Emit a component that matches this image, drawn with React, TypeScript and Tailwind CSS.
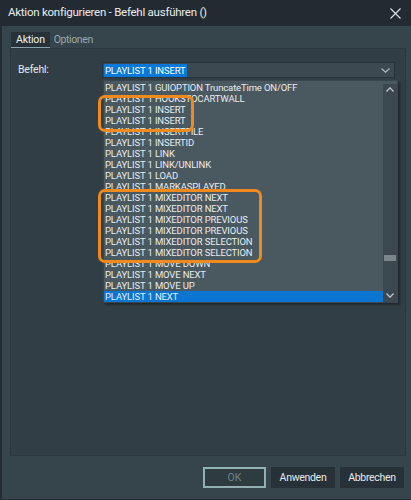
import React from 'react';

const commands = [
  'PLAYLIST 1 GUIOPTION TruncateTime ON/OFF',
  'PLAYLIST 1 HOOKSTOCARTWALL',
  'PLAYLIST 1 INSERT',
  'PLAYLIST 1 INSERT',
  'PLAYLIST 1 INSERTFILE',
  'PLAYLIST 1 INSERTID',
  'PLAYLIST 1 LINK',
  'PLAYLIST 1 LINK/UNLINK',
  'PLAYLIST 1 LOAD',
  'PLAYLIST 1 MARKASPLAYED',
  'PLAYLIST 1 MIXEDITOR NEXT',
  'PLAYLIST 1 MIXEDITOR NEXT',
  'PLAYLIST 1 MIXEDITOR PREVIOUS',
  'PLAYLIST 1 MIXEDITOR PREVIOUS',
  'PLAYLIST 1 MIXEDITOR SELECTION',
  'PLAYLIST 1 MIXEDITOR SELECTION',
  'PLAYLIST 1 MOVE DOWN',
  'PLAYLIST 1 MOVE NEXT',
  'PLAYLIST 1 MOVE UP',
  'PLAYLIST 1 NEXT',
];

const Chevron = ({ up = false, w = 8, h = 5, color = '#c3cbcf' }: { up?: boolean; w?: number; h?: number; color?: string }) => (
  <svg width={w} height={h} viewBox={`0 0 ${w} ${h}`} fill="none">
    <path
      d={up ? `M0.5 ${h - 0.5} L${w / 2} 0.8 L${w - 0.5} ${h - 0.5}` : `M0.5 0.5 L${w / 2} ${h - 0.8} L${w - 0.5} 0.5`}
      stroke={color}
      strokeWidth="1.2"
    />
  </svg>
);

const App = () => {
  const selected = commands.length - 1;

  return (
    <div className="w-[411px] h-[500px] flex flex-col bg-[#36454c] border-l-2 border-b border-[#232c31] font-['Roboto','Liberation_Sans',sans-serif] overflow-hidden">
      {/* Title bar */}
      <div className="h-[26px] shrink-0 bg-[#222b31] flex items-center justify-between pl-[6px] pr-[10px]">
        <span className="text-[11.5px] text-[#e9edef] tracking-[-0.25px]">Aktion konfigurieren - Befehl ausführen ()</span>
        <svg width="11" height="11" viewBox="0 0 11 11">
          <path d="M0.5 0.5 L10.5 10.5 M10.5 0.5 L0.5 10.5" stroke="#dfe4e6" strokeWidth="1.1" />
        </svg>
      </div>

      {/* Tabs */}
      <div className="h-[22px] shrink-0 flex items-end pl-[9px] gap-[4px]">
        <div className="h-[16px] px-[5px] bg-[#263238] border-b border-[#8aa3aa] flex items-center text-[10.5px] text-[#eef1f2] tracking-[-0.2px]">
          Aktion
        </div>
        <div className="h-[16px] flex items-center text-[10.5px] text-[#9aa7ac] tracking-[-0.4px]">Optionen</div>
      </div>

      {/* Tab page */}
      <div className="relative ml-[8px] w-[396px] h-[408px] shrink-0 bg-[#313e45] border border-[#2c383e]">
        <div className="flex items-center pt-[13px] pl-[7px]">
          <span className="w-[84px] text-[10.5px] text-[#e4e9eb] tracking-[-0.2px]">Befehl:</span>
          <div className="w-[293px] h-[16px] bg-[#3c4950] border border-[#29343a] flex items-center justify-between pl-[1px] pr-[4px]">
            <span className="bg-[#0a78d6] text-white text-[9.5px] leading-[13px] px-[1px] tracking-[-0.15px]">PLAYLIST 1 INSERT</span>
            <Chevron w={9} h={5} color="#aeb8bd" />
          </div>
        </div>

        {/* Open dropdown */}
        <div className="absolute left-[92px] top-[31px] w-[295px] h-[223px] bg-[#4a5860] border border-[#3a464d] shadow-[2px_2px_2px_rgba(0,0,0,0.35)] flex">
          <div className="flex-1 flex flex-col pt-[1px]">
            {commands.map((cmd, i) => (
              <div
                key={i}
                className={
                  i === selected
                    ? 'h-[11px] leading-[11px] pl-[1px] text-[9.5px] tracking-[-0.15px] whitespace-nowrap bg-[#0a76d2] text-[#e3f0ff]'
                    : 'h-[11px] leading-[11px] pl-[1px] text-[9.5px] tracking-[-0.15px] whitespace-nowrap text-[#e8edef]'
                }
              >
                {cmd}
              </div>
            ))}
          </div>
          <div className="w-[14px] mt-[3px] bg-[#3b4850] flex flex-col items-center">
            <div className="pt-[3px]">
              <Chevron up w={8} h={5} />
            </div>
            <div className="mt-[163px] w-[12px] h-[6px] bg-[#79858b]" />
            <div className="mt-auto pb-[4px]">
              <Chevron w={8} h={5} />
            </div>
          </div>
        </div>

        {/* Highlight marks */}
        <div className="absolute left-[87px] top-[46px] w-[96px] h-[37px] border-[3px] border-[#f08a1d] rounded-[7px]" />
        <div className="absolute left-[87px] top-[140px] w-[164px] h-[74px] border-[3px] border-[#f08a1d] rounded-[7px]" />
      </div>

      {/* Buttons */}
      <div className="flex justify-end gap-[5px] pr-[7px] mt-[11px]">
        <button className="w-[63px] h-[21px] bg-[#2e3b41] border-2 border-[#8fb1b1] text-[10.5px] text-[#6f8488]">OK</button>
        <button className="w-[64px] h-[21px] bg-[#263138] text-[10.5px] text-[#e6eaec] tracking-[-0.3px]">Anwenden</button>
        <button className="w-[64px] h-[21px] bg-[#263138] text-[10.5px] text-[#e6eaec] tracking-[-0.3px]">Abbrechen</button>
      </div>
    </div>
  );
};

export default App;
